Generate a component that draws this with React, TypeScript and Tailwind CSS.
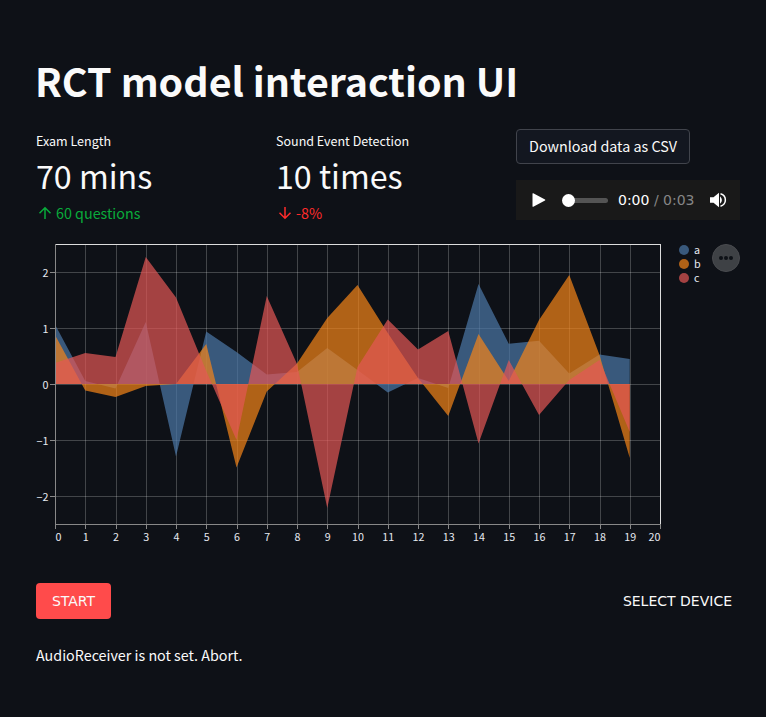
import React from "react";

const SANS = "font-['Noto_Sans_CJK_SC','Noto_Sans',sans-serif]";

const X0 = 55.5;
const STEP = 30.25;
const ZERO = 384;

type Series = { name: string; color: string; values: number[] };

// Each value is the vertical position of a sample, in chart pixels.
const series: Series[] = [
  {
    name: "a",
    color: "#4c78a8",
    values: [324.5, 381, 388.5, 322, 456.5, 331.5, 352, 374.5, 372, 348, 370, 392.5, 378, 388, 284, 343.8, 340.8, 373.5, 354.5, 359],
  },
  {
    name: "b",
    color: "#f58518",
    values: [335, 390.5, 397, 386, 384, 344, 467.5, 391.5, 363.5, 318, 285, 333, 378, 416, 334, 381, 320, 275, 355, 458],
  },
  {
    name: "c",
    color: "#e45756",
    values: [363, 353, 357, 257, 297.5, 371, 440, 296, 364, 508, 367, 319.5, 349.5, 331, 443.5, 360, 415, 380, 360, 432],
  },
];

const areaPath = (values: number[]) =>
  `M${X0 - 0.5} ${ZERO} ` +
  values.map((y, i) => `L${X0 - 0.5 + i * STEP} ${y}`).join(" ") +
  ` L${X0 - 0.5 + 19 * STEP} ${ZERO} Z`;

const ticks = Array.from({ length: 21 }, (_, i) => i);
const tickX = (i: number) => Math.round(55 + i * STEP) + 0.5;
const rows = [
  { label: "2", y: 272.5 },
  { label: "1", y: 328.5 },
  { label: "0", y: 384.5 },
  { label: "−1", y: 440.5 },
  { label: "−2", y: 496.5 },
];

function Chart() {
  return (
    <svg width="704" height="310" viewBox="36 240 704 310" className={`block ${SANS} text-[10.74px]`}>
      <g stroke="#fff" strokeOpacity="0.22">
        {ticks.map((i) => (
          <line key={i} x1={tickX(i)} x2={tickX(i)} y1="244" y2="524" />
        ))}
        {rows.map((r) => (
          <line key={r.label} x1="55" x2="660" y1={r.y} y2={r.y} />
        ))}
      </g>
      <rect x="55.5" y="244.5" width="605" height="280" fill="none" stroke="#ddd" />
      {series.map((s) => (
        <path key={s.name} d={areaPath(s.values)} fill={s.color} fillOpacity="0.7" />
      ))}
      <g stroke="#888">
        <path d="M55.5 244V525M55 524.5H661" />
        {ticks.map((i) => (
          <line key={i} x1={tickX(i)} x2={tickX(i)} y1="524" y2="529" />
        ))}
        {rows.map((r) => (
          <line key={r.label} x1="50" x2="55" y1={r.y} y2={r.y} />
        ))}
      </g>
      <g fill="#e6eaf1">
        {rows.map((r) => (
          <text key={r.label} x="48.5" y={r.y + 4} textAnchor="end">
            {r.label}
          </text>
        ))}
        {ticks.map((i) => (
          <text
            key={i}
            x={i === 0 ? 55.5 : i === 20 ? 660.5 : 55 + i * STEP + 0.5}
            y="541"
            textAnchor={i === 0 ? "start" : i === 20 ? "end" : "middle"}
          >
            {i}
          </text>
        ))}
        {series.map((s, i) => (
          <text key={s.name} x="694" y={254 + i * 14}>
            {s.name}
          </text>
        ))}
      </g>
      {series.map((s, i) => (
        <circle key={s.name} cx="684" cy={250 + i * 14} r="5" fill={s.color} fillOpacity="0.7" />
      ))}
      <circle cx="726" cy="258" r="13.5" fill="#3e4145" stroke="#494b4f" />
      <g fill="#0e1117">
        <circle cx="721" cy="258" r="2" />
        <circle cx="726" cy="258" r="2" />
        <circle cx="731" cy="258" r="2" />
      </g>
    </svg>
  );
}

function Metric({ label, value, delta, up }: { label: string; value: string; delta: string; up: boolean }) {
  return (
    <div className="w-[224px] whitespace-nowrap">
      <div className="h-[22px] pt-px text-[12.53px] leading-[22px]">{label}</div>
      <div className="h-[50px] text-[32.2px] font-normal leading-[48px]">{value}</div>
      <div className={`flex h-6 items-center text-[14.32px] leading-6 ${up ? "text-[#09ab3b]" : "text-[#ff2b2b]"}`}>
        <svg width="18" height="18" viewBox="0 0 18 18" fill="none" stroke="currentColor" strokeWidth="1.5" className="mr-0.5">
          <path d={up ? "M9 15V4M3.5 9.3L9 3.8l5.500 5.500" : "M9 3v11M3.500 8.700L9 14.200l5.500-5.500"} />
        </svg>
        {delta}
      </div>
    </div>
  );
}

function AudioBar() {
  return (
    <div className="flex h-10 w-[224px] items-center bg-[#191919] font-['DejaVu_Sans',sans-serif] text-[14px] text-white">
      <svg width="14" height="14" viewBox="0 0 14 14" className="ml-[16px] mr-[16px] block">
        <path d="M.5.8Q.5 0 1.300.3L13 6.500Q13.800 7 13 7.500L1.300 13.700Q.500 14 .500 13.200Z" fill="#fff" />
      </svg>
      <div className="flex w-[46px] items-center">
        <div className="z-10 size-[13px] shrink-0 rounded-full bg-white" />
        <div className="-ml-1 h-[5px] grow rounded-r-full bg-[#545454]" />
      </div>
      <div className="ml-[10px] w-[91px] whitespace-nowrap leading-5">
        0:00<span className="text-[#868686]"> / 0:03</span>
      </div>
      <svg width="18" height="16" viewBox="0 0 18 16" fill="none" stroke="#fff" strokeWidth="1.500">
        <path d="M1 5.200h3.500L10 .8v14.400L4.500 10.800H1Z" fill="#fff" stroke="none" />
        <path d="M11 4.200Q14.800 8 11 11.800Z" fill="#fff" stroke="none" />
        <path d="M11.500 1.800C18 3.800 18 12.200 11.500 14.200" />
      </svg>
    </div>
  );
}

export default function App() {
  return (
    <main className={`h-[717px] w-[766px] overflow-hidden bg-[#0e1117] pl-9 text-[#fafafa] ${SANS}`}>
      <h1 className="-ml-px whitespace-nowrap pt-[53px] text-[39.4px] font-bold leading-[53px]">RCT model interaction UI</h1>
      <div className="mt-[23px] flex h-[111px] gap-4">
        <Metric label="Exam Length" value="70 mins" delta="60 questions" up />
        <Metric label="Sound Event Detection" value="10 times" delta="-8%" up={false} />
        <div>
          <button className="block h-[35px] w-[174px] whitespace-nowrap rounded border border-[#41444c] bg-[#131720] pb-0.5 text-[14.32px] leading-[31px]">
            Download data as CSV
          </button>
          <div className="mt-4">
            <AudioBar />
          </div>
        </div>
      </div>
      <Chart />
      <div className="mt-[33px] flex h-9 w-[704px] items-center justify-between font-['DejaVu_Sans',sans-serif] text-[14px]">
        <button className="h-9 w-[75px] rounded bg-[#ff4b4b]">START</button>
        <button className="px-2">SELECT DEVICE</button>
      </div>
      <p className="mt-[23px] text-[14.32px] leading-[25.6px]">AudioReceiver is not set. Abort.</p>
    </main>
  );
}
